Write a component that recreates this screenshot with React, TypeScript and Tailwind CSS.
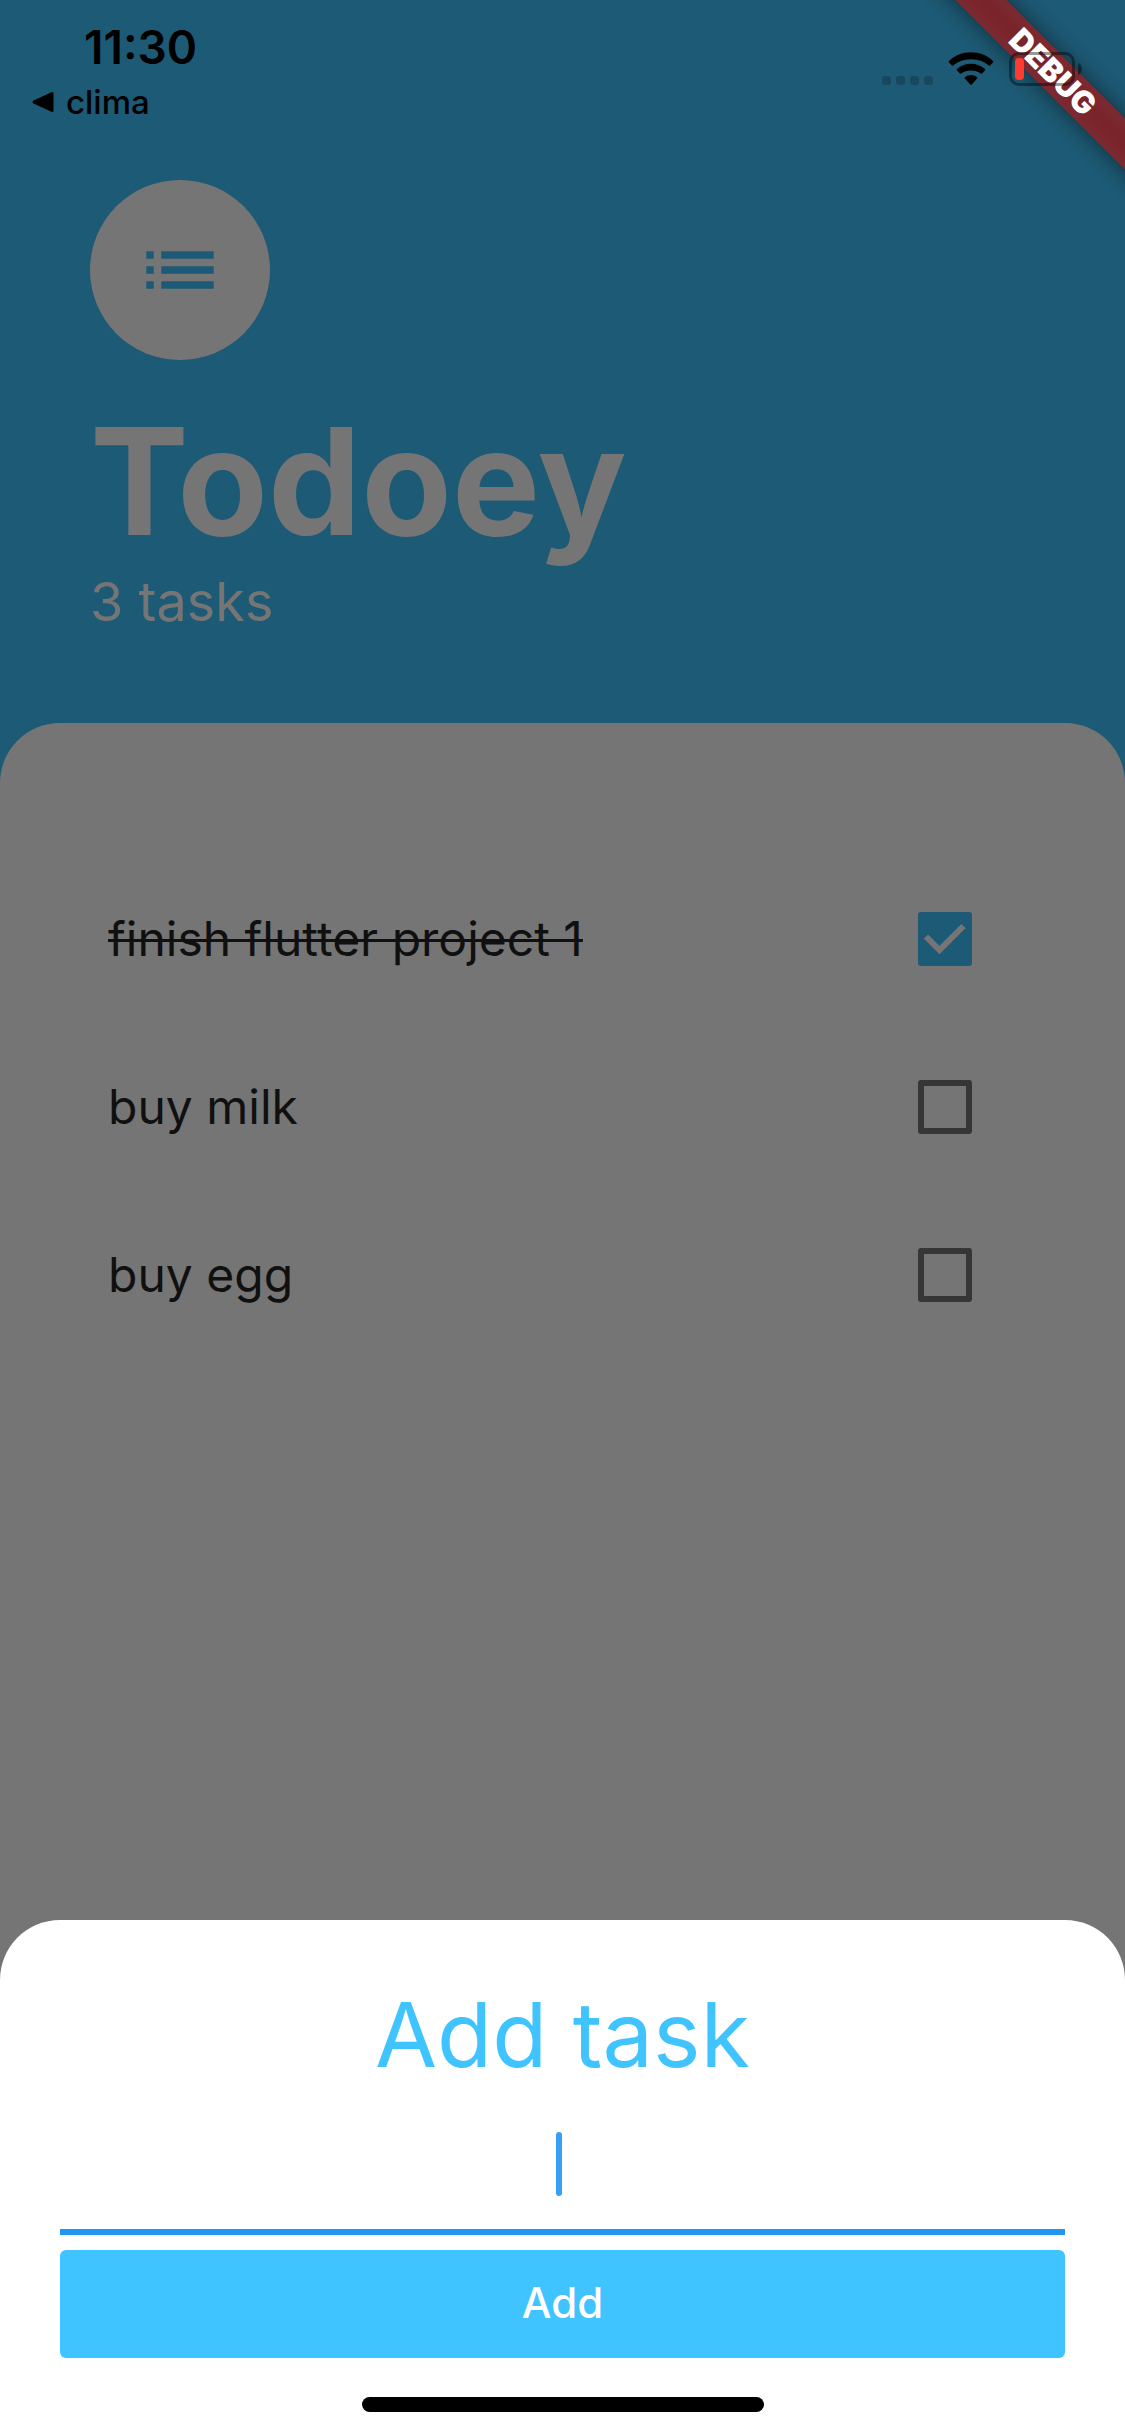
import { useState } from "react";

type Task = { id: string; title: string; done: boolean };

const initialTasks: Task[] = [
  { id: "flutter", title: "finish flutter project 1", done: true },
  { id: "milk", title: "buy milk", done: false },
  { id: "egg", title: "buy egg", done: false },
];

function WifiIcon() {
  return (
    <svg width="46" height="34" viewBox="0 0 46 34" aria-hidden="true">
      <path d="M23 0.3C31.700 0.300 39.300 3.500 45 9C45.500 9.500 45.500 10 45 10.500L42 13.500C41.600 13.900 41.200 13.900 40.800 13.500C36 9.500 30 7.300 23 7.300C16 7.300 10 9.500 5.200 13.500C4.800 13.900 4.400 13.900 4 13.500L1 10.500C.5 10 .5 9.500 1 9C6.700 3.500 14.300 .3 23 .3Z" />
      <path d="M23 11.700C28.500 11.700 33.300 13.700 37 17C37.500 17.500 37.500 18 37 18.500L34 21.500C33.600 21.900 33.200 21.900 32.800 21.500C30.100 19.500 26.800 18.500 23 18.500C19.200 18.500 15.900 19.500 13.200 21.500C12.800 21.900 12.400 21.900 12 21.500L9 18.500C8.500 18 8.500 17.500 9 17C12.700 13.700 17.500 11.700 23 11.700Z" />
      <path d="M23 23C25.300 23 27.400 23.800 29 25.200C29.500 25.600 29.500 26.100 29.100 26.600L23.700 32.500C23.300 33 22.700 33 22.300 32.500L16.900 26.600C16.500 26.100 16.500 25.600 17 25.200C18.600 23.800 20.700 23 23 23Z" />
    </svg>
  );
}

function BatteryIcon() {
  return (
    <svg width="74" height="34" viewBox="0 0 74 34" aria-hidden="true">
      <rect x="1.500" y="1.500" width="63" height="31" rx="8.500" fill="none" stroke="#000" strokeOpacity=".4" strokeWidth="3" />
      <rect x="6" y="6" width="9" height="22" rx="4" fill="#ff3b30" />
      <path d="M69 11c2.600 1.200 4 3.400 4 6s-1.400 4.800-4 6z" fillOpacity=".45" />
    </svg>
  );
}

function DebugBanner() {
  return (
    <div className="pointer-events-none absolute top-0 right-0 h-60 w-60 overflow-hidden">
      <div className="absolute top-[54px] -left-3 h-9 w-[360px] rotate-45">
        <div className="absolute inset-0 bg-black/50 blur-[12px]" />
        <div className="absolute inset-0 flex items-center justify-center bg-[#b71c1c]/63 text-[31px] font-black text-white">
          DEBUG
        </div>
      </div>
    </div>
  );
}

function StatusBar() {
  return (
    <div className="relative flex justify-between pr-[42px] pl-8 text-black">
      <div className="pt-6">
        <div className="pl-[52px] text-[46px] leading-[46px] font-semibold">11:30</div>
        <button type="button" className="flex items-center gap-3 text-[33px] leading-[64px] font-medium">
          <svg width="22" height="22" viewBox="0 0 22 22" aria-hidden="true">
            <path d="M19.500 1.200C20.700 .6 21.500 1.200 21.500 2.400V19.600C21.500 20.800 20.700 21.400 19.500 20.800L1.500 12.400C.3 11.800 .3 10.200 1.500 9.600Z" />
          </svg>
          clima
        </button>
      </div>
      <div className="flex items-start gap-[15px] pt-[52px]">
        <div className="flex gap-[5px] pt-6">
          <span className="size-[9px] rounded-[3px] bg-black/20" />
          <span className="size-[9px] rounded-[3px] bg-black/20" />
          <span className="size-[9px] rounded-[3px] bg-black/20" />
          <span className="size-[9px] rounded-[3px] bg-black/20" />
        </div>
        <WifiIcon />
        <BatteryIcon />
      </div>
    </div>
  );
}

function TaskRow({ task, onToggle }: { task: Task; onToggle: () => void }) {
  return (
    <li>
      <label className="flex h-[168px] items-center justify-between pr-[63px] pl-[18px]">
        <span
          className={
            task.done
              ? "text-[48px] text-[#101010] line-through decoration-3"
              : "text-[48px] text-[#101010]"
          }
        >
          {task.title}
        </span>
        <span className="relative flex">
          <input
            type="checkbox"
            checked={task.done}
            onChange={onToggle}
            className="size-[54px] appearance-none rounded-[3px] border-6 border-[#363636] checked:border-[#1d5a75] checked:bg-[#1d5a75]"
          />
          {task.done && (
            <svg className="pointer-events-none absolute inset-0" width="54" height="54" viewBox="0 0 54 54" aria-hidden="true">
              <path d="M8 24.500L21.500 38L45.500 14" fill="none" stroke="#757575" strokeWidth="6" />
            </svg>
          )}
        </span>
      </label>
    </li>
  );
}

export default function App() {
  const [tasks, setTasks] = useState(initialTasks);
  const [title, setTitle] = useState("");

  const toggle = (id: string) =>
    setTasks(tasks.map((t) => (t.id === id ? { ...t, done: !t.done } : t)));

  const add = () => {
    if (!title) return;
    setTasks([...tasks, { id: String(tasks.length), title, done: false }]);
    setTitle("");
  };

  return (
    <div className="relative flex min-h-screen flex-col overflow-hidden bg-[#1d5a75] font-[Inter,'Liberation_Sans',sans-serif]">
      <DebugBanner />
      <StatusBar />

      <header className="px-[90px] pt-[46px] pb-[89px] text-[#757575]">
        <div className="flex size-[180px] items-center justify-center rounded-full bg-[#757575]">
          <svg width="90" height="90" viewBox="0 0 24 24" fill="#1d5a75" aria-hidden="true">
            <path d="M3 13h2v-2H3v2zm0 4h2v-2H3v2zm0-8h2V7H3v2zm4 4h14v-2H7v2zm0 4h14v-2H7v2zM7 7v2h14V7H7z" />
          </svg>
        </div>
        <h1 className="mt-[34px] text-[148px] leading-[176px] font-bold">Todoey</h1>
        <p className="text-[54px] leading-[64px]">{tasks.length} tasks</p>
      </header>

      <main className="flex-1 rounded-t-[60px] bg-[#757575] px-[90px] pt-[132px]">
        <ul>
          {tasks.map((task) => (
            <TaskRow key={task.id} task={task} onToggle={() => toggle(task.id)} />
          ))}
        </ul>
      </main>

      <div className="bg-[#757575]">
        <form
          className="flex flex-col rounded-t-[60px] bg-white px-[60px] pt-[60px] pb-6"
          onSubmit={(e) => {
            e.preventDefault();
            add();
          }}
        >
          <h2 className="text-center text-[90px] leading-[110px] text-[#40c4ff]">
            <label htmlFor="task-title">Add task</label>
          </h2>
          <div className="relative">
            <input
              id="task-title"
              value={title}
              onChange={(e) => setTitle(e.target.value)}
              className="block h-[145px] w-full border-b-6 border-[#2196f3] text-center text-[48px] text-[#212121] caret-[#2196f3] outline-none"
            />
            {!title && (
              <span className="pointer-events-none absolute top-[42px] left-1/2 h-16 w-1.5 -translate-x-[7px] rounded-full bg-[#2196f3]/90" />
            )}
          </div>
          <button
            type="submit"
            className="mt-[15px] h-[108px] rounded-[6px] bg-[#40c4ff] pb-1 text-[42px] font-medium text-white"
          >
            Add
          </button>
          <div className="mt-[39px] h-[15px] w-[402px] self-center rounded-full bg-black" />
        </form>
      </div>
    </div>
  );
}
